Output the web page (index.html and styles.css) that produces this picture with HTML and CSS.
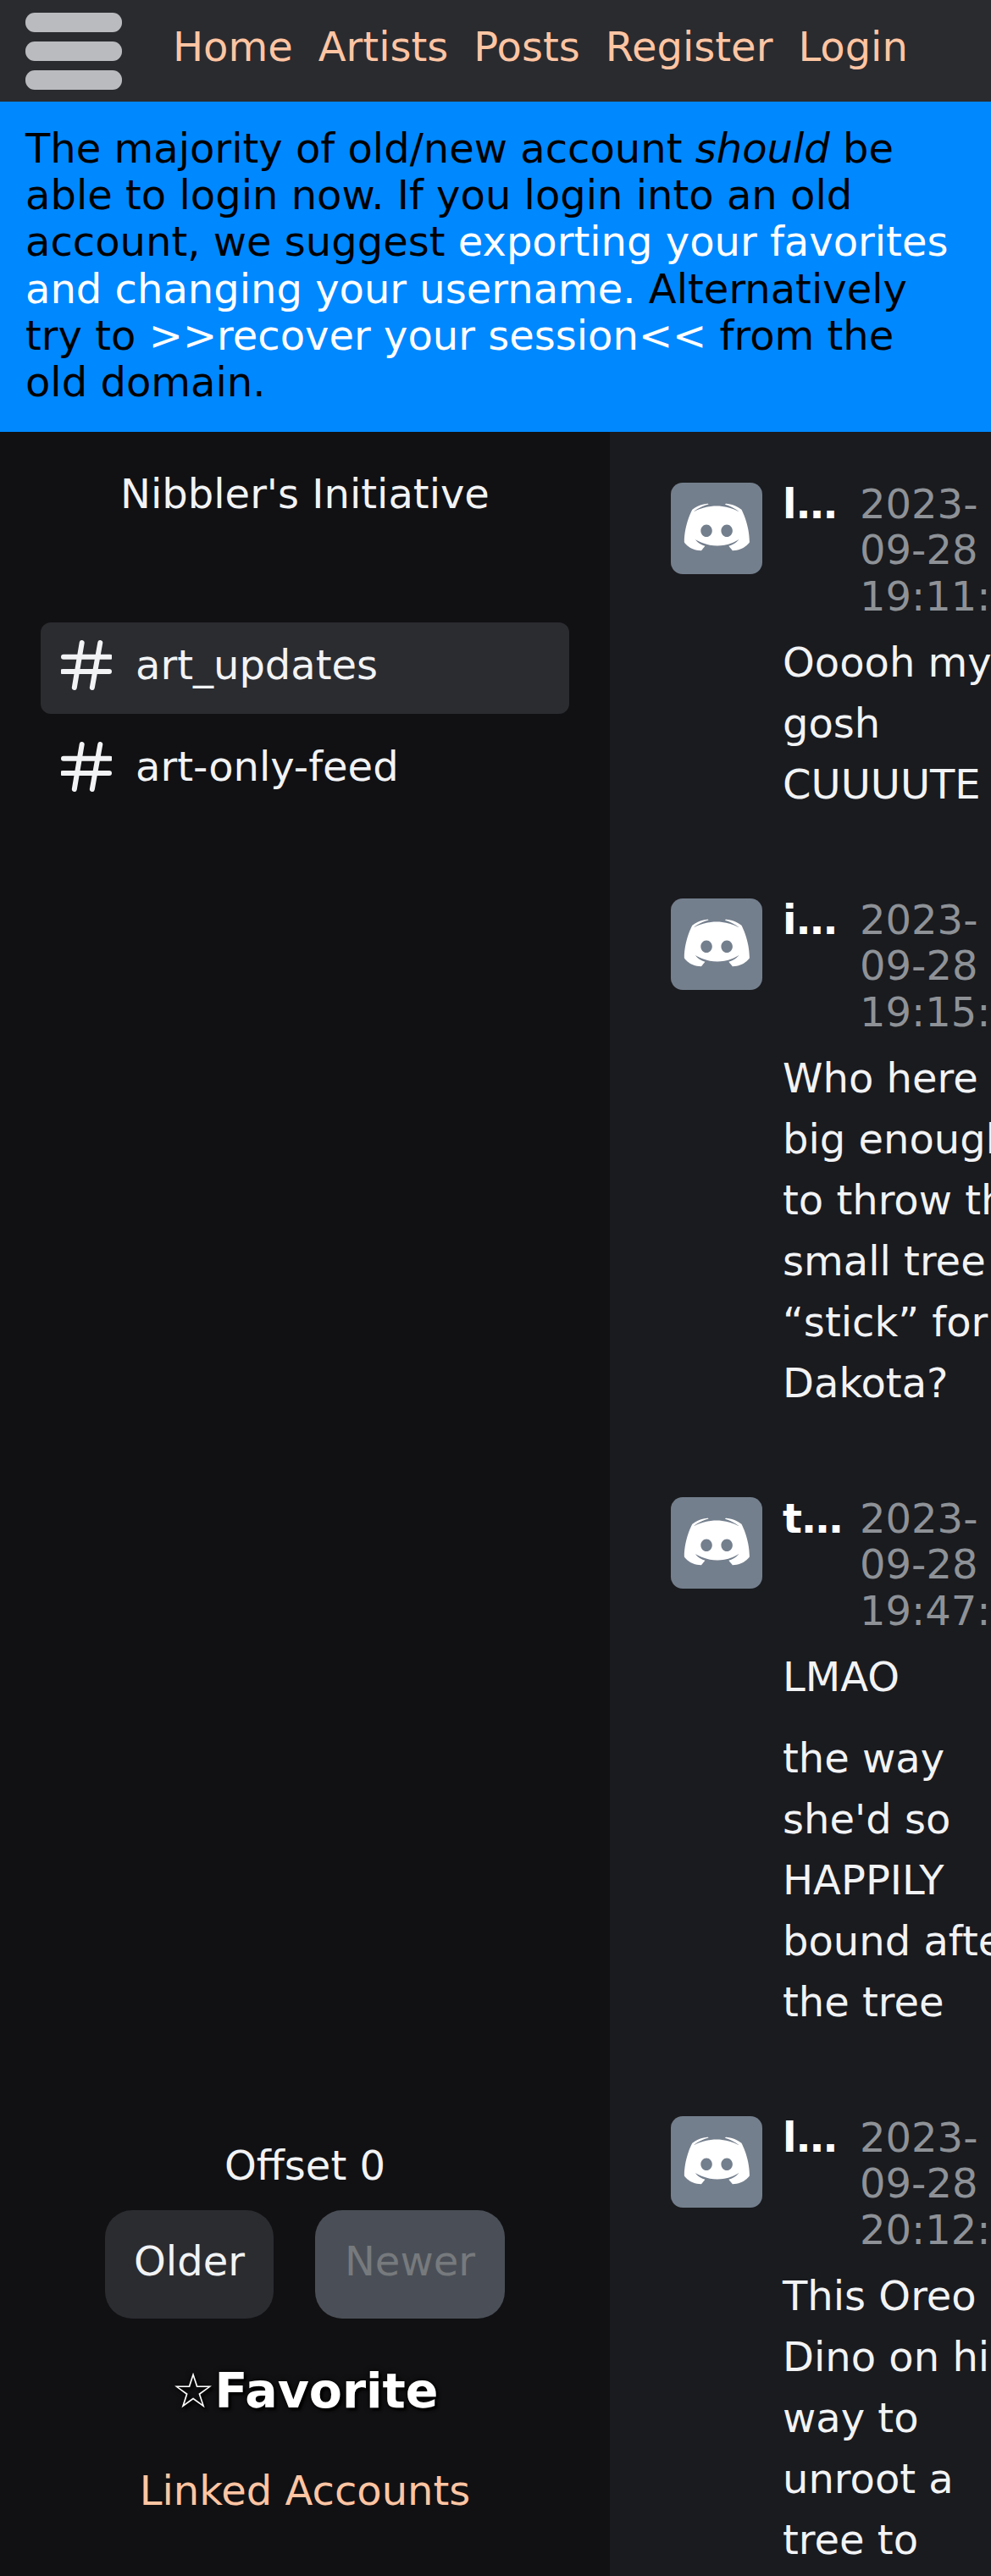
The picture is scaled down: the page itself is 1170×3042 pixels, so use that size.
FILE: index.html
```html
<!DOCTYPE html>
<html lang="en">
<head>
  <meta charset="UTF-8" />
  <title>Nibbler's Initiative</title>
  <link rel="stylesheet" href="styles.css">
</head>
<body>
  <svg class="sprites" width="0" height="0">
    <symbol id="discord" viewBox="0 0 108 108">
      <g transform="translate(54 52.5) scale(.66) translate(-122.5 -108.6)">
        <path fill="#fff" d="M150.9 150.6s-3.6-4.3-6.6-8.1c13.1-3.7 18.1-11.9 18.1-11.9-4.1 2.7-8 4.6-11.5 5.9-5 2.1-9.8 3.5-14.5 4.3-9.6 1.8-18.4 1.3-25.9-.1-5.7-1.1-10.6-2.7-14.7-4.3-2.3-.9-4.8-2-7.3-3.4-.3-.2-.6-.3-.9-.5-.2-.1-.3-.2-.4-.3-1.8-1-2.8-1.7-2.8-1.7s4.8 8 17.5 11.8c-3 3.8-6.7 8.3-6.7 8.3-22.1-.7-30.5-15.2-30.5-15.2 0-32.2 14.4-58.3 14.4-58.3 14.4-10.8 28.1-10.5 28.1-10.5l1 1.2c-18 5.2-26.3 13.1-26.3 13.1s2.2-1.2 5.9-2.9c10.7-4.7 19.2-6 22.7-6.3.6-.1 1.1-.2 1.7-.2 6.1-.8 13-1 20.2-.2 9.5 1.1 19.7 3.9 30.1 9.6 0 0-7.9-7.5-24.9-12.7l1.4-1.6s13.7-.3 28.1 10.5c0 0 14.4 26.1 14.4 58.3 0 0-8.5 14.5-30.6 15.2z"/>
        <path fill="#747f8d" d="M104.4 103.9c-5.7 0-10.2 5-10.2 11.1s4.6 11.1 10.2 11.1c5.7 0 10.2-5 10.2-11.1.1-6.1-4.5-11.1-10.2-11.1zM140.9 103.9c-5.7 0-10.2 5-10.2 11.1s4.6 11.1 10.2 11.1c5.7 0 10.2-5 10.2-11.1s-4.5-11.1-10.2-11.1z"/>
      </g>
    </symbol>
    <symbol id="hash" viewBox="0 0 60 60">
      <path d="M24.7 3 15.8 56M46.3 3 36.8 56M3 19.7H58M2 37H57" fill="none" stroke="#f2f3f5" stroke-width="6" stroke-linecap="round"/>
    </symbol>
  </svg>

  <nav class="topbar">
    <button class="burger" aria-label="Menu"><span></span><span></span><span></span></button>
    <a href="#">Home</a>
    <a href="#">Artists</a>
    <a href="#">Posts</a>
    <a href="#">Register</a>
    <a href="#">Login</a>
  </nav>

  <div class="notice">
    The majority of old/new account <em>should</em> be able to login now. If you login into an old account, we suggest <a href="#">exporting your favorites and changing your username.</a> Alternatively try to <a href="#">&gt;&gt;recover your session&lt;&lt;</a> from the old domain.
  </div>

  <div class="layout">
    <aside class="sidebar">
      <h1 class="server-name">Nibbler's Initiative</h1>
      <ul class="channels">
        <li class="channel active"><svg class="hash"><use href="#hash"/></svg><span class="channel-name">art_updates</span></li>
        <li class="channel"><svg class="hash"><use href="#hash"/></svg><span class="channel-name">art-only-feed</span></li>
      </ul>
      <div class="side-foot">
        <div class="offset">Offset 0</div>
        <div class="pager">
          <button class="btn">Older</button>
          <button class="btn disabled">Newer</button>
        </div>
        <div class="favorite">☆Favorite</div>
        <a class="linked" href="#">Linked Accounts</a>
      </div>
    </aside>

    <main class="messages">
      <article class="msg">
        <div class="avatar"><svg><use href="#discord"/></svg></div>
        <div class="msg-body">
          <header class="msg-head"><b class="author">l…</b><time class="stamp">2023-09-28 19:11:</time></header>
          <p>Ooooh my gosh CUUUUTE</p>
        </div>
      </article>
      <article class="msg">
        <div class="avatar"><svg><use href="#discord"/></svg></div>
        <div class="msg-body">
          <header class="msg-head"><b class="author">i…</b><time class="stamp">2023-09-28 19:15:</time></header>
          <p>Who here big enough to throw the small tree “stick” for Dakota?</p>
        </div>
      </article>
      <article class="msg">
        <div class="avatar"><svg><use href="#discord"/></svg></div>
        <div class="msg-body">
          <header class="msg-head"><b class="author">t…</b><time class="stamp">2023-09-28 19:47:</time></header>
          <p>LMAO</p>
          <p>the way she'd so HAPPILY bound after the tree</p>
        </div>
      </article>
      <article class="msg">
        <div class="avatar"><svg><use href="#discord"/></svg></div>
        <div class="msg-body">
          <header class="msg-head"><b class="author">l…</b><time class="stamp">2023-09-28 20:12:</time></header>
          <p>This Oreo Dino on his way to unroot a tree to</p>
        </div>
      </article>
    </main>
  </div>
</body>
</html>
```

FILE: styles.css
```css
* { box-sizing: border-box; }
html, body { margin: 0; height: 100%; }
body { display: flex; flex-direction: column; width: 1170px; height: 3042px; overflow: hidden; background: #1a1b1f; color: #f2f3f5; font-family: "DejaVu Sans", sans-serif; font-size: 48px; }
a { color: inherit; text-decoration: none; }
.sprites { position: absolute; }

.topbar { display: flex; align-items: center; gap: 30px; height: 120px; flex: none; padding: 0 30px; background: #2a2b2f; }
.topbar a { padding-bottom: 10px; color: #ffc5a3; }
.burger { display: flex; flex-direction: column; gap: 11px; flex: none; width: 114px; margin-right: 30px; padding: 0; background: none; border: none; }
.burger span { display: block; height: 23px; border-radius: 11px; background: #babbbf; }

.notice { flex: none; height: 390px; padding: 28px 30px; background: #0088ff; color: #000; line-height: 1.15; }
.notice a { color: #fff; }

.layout { display: flex; flex: 1; min-height: 0; }
.sidebar { display: flex; flex-direction: column; flex: none; width: 720px; padding: 46px 48px 73px; background: #111113; text-align: center; }
.server-name { margin: 0; font-size: 48px; font-weight: normal; line-height: 55px; }
.channels { margin: 124px 0 0; padding: 0; list-style: none; text-align: left; }
.channel { display: flex; align-items: center; gap: 28px; height: 108px; margin-bottom: 12px; padding: 0 24px; border-radius: 12px; }
.channel.active { background: #2b2c30; }
.channel-name { margin-bottom: 8px; }
.hash { width: 60px; height: 60px; flex: none; margin-bottom: 6px; }

.side-foot { margin-top: auto; }
.offset { line-height: 55px; }
.pager { display: flex; justify-content: center; gap: 49px; margin-top: 25px; }
.btn { height: 128px; padding: 0 34px 8px; border: none; border-radius: 32px; background: #2b2c30; color: #f2f3f5; font-family: inherit; font-size: 48px; }
.btn.disabled { padding: 0 35px 8px; background: #4a4f57; color: #777a7d; }
.favorite { margin-top: 52px; font-size: 57px; font-weight: bold; color: #fff; text-shadow: 0 0 6px #000, 3px 3px 3px #000; }
.linked { display: block; margin-top: 57px; color: #ffc5a3; }

.messages { flex: 1; min-width: 0; overflow: hidden; padding: 60px 0 0 72px; }
.msg { display: flex; gap: 24px; width: 450px; margin-bottom: 75px; }
.avatar { width: 108px; height: 108px; flex: none; border-radius: 14px; background: #747f8d; }
.avatar svg { display: block; width: 108px; height: 108px; }
.msg-body { flex: none; width: 310px; }
.msg-head { display: flex; gap: 23px; height: 164px; margin-bottom: 12px; }
.author { flex: none; width: 68px; line-height: 50px; color: #fff; }
.stamp { flex: none; width: 150px; margin-top: -2px; color: #8e9297; line-height: 54.4px; }
.msg-body p { margin: 0 0 24px; line-height: 72px; }
```
